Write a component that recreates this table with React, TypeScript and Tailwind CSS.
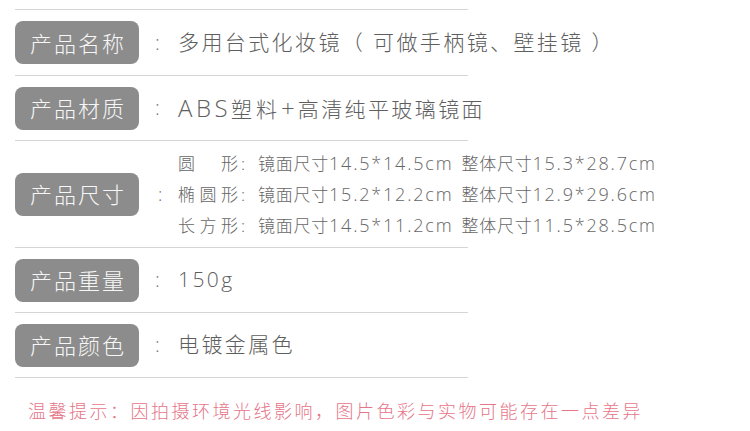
import React from 'react';

const font = { fontFamily: '"Open Sans", "Noto Sans CJK SC", sans-serif' };

interface RowProps {
  label: string;
  height: string;
  children: React.ReactNode;
}

const Label: React.FC<{ text: string }> = ({ text }) => (
  <div className="w-[124px] h-[43px] shrink-0 rounded-[8px] bg-[#8c8c8c] flex items-center justify-center">
    <span className="text-[22px] leading-none tracking-[2px] pl-[2px] text-[#f7f7f7] font-light">{text}</span>
  </div>
);

const Row: React.FC<RowProps> = ({ label, height, children }) => (
  <div className={`flex items-center border-b border-[#d5d5d5] ${height}`}>
    <Label text={label} />
    <div className="w-[39px] shrink-0 pl-[16px] text-[20px] text-[#777] font-light">:</div>
    <div className="text-[21px] tracking-[2.4px] text-[#5e5e5e] font-light whitespace-nowrap">{children}</div>
  </div>
);

const sizes = [
  { shape: ['圆', '形'], mirror: '14.5*14.5cm', whole: '15.3*28.7cm' },
  { shape: ['椭', '圆', '形'], mirror: '15.2*12.2cm', whole: '12.9*29.6cm' },
  { shape: ['长', '方', '形'], mirror: '14.5*11.2cm', whole: '11.5*28.5cm' },
];

export default function App() {
  return (
    <div className="w-[750px] h-[431px] bg-white pt-[9px]" style={font}>
      <div className="ml-[15px] w-[453px] border-t border-[#d5d5d5]">
        <Row label="产品名称" height="h-[66px]">
          多用台式化妆镜（ 可做手柄镜、壁挂镜 ）
        </Row>
        <Row label="产品材质" height="h-[65px]">
          <span className="text-[24px] tracking-[3.5px]">ABS</span>
          <span className="tracking-[4px]">塑料</span>
          <span className="text-[24px] tracking-[3px]">+</span>高清纯平玻璃镜面
        </Row>
        <div className="flex items-center border-b border-[#d5d5d5] h-[107px]">
          <Label text="产品尺寸" />
          <div className="w-[39px] shrink-0 pl-[19px] text-[18px] text-[#777] font-light">:</div>
          <div className="flex flex-col text-[17px] leading-[31px] text-[#666] font-light whitespace-nowrap pt-[1px]">
            {sizes.map((s) => (
              <div key={s.mirror} className="flex items-center">
                <span className="w-[60px] flex justify-between">
                  {s.shape.map((c) => (
                    <span key={c}>{c}</span>
                  ))}
                </span>
                <span className="w-[20px] pl-[3px]">:</span>
                <span className="tracking-[0.75px]">镜面尺寸</span>
                <span className="text-[18px] tracking-[1.8px]">{s.mirror}</span>
                <span className="ml-[8px] tracking-[0.75px]">整体尺寸</span>
                <span className="text-[18px] tracking-[1.8px]">{s.whole}</span>
              </div>
            ))}
          </div>
        </div>
        <Row label="产品重量" height="h-[65px]">
          150g
        </Row>
        <Row label="产品颜色" height="h-[65px]">
          电镀金属色
        </Row>
      </div>
      <p className="ml-[28px] mt-[20px] text-[18px] leading-[27px] tracking-[2.5px] text-[#e57588] font-light whitespace-nowrap">
        温馨提示：因拍摄环境光线影响，图片色彩与实物可能存在一点差异
      </p>
    </div>
  );
}
